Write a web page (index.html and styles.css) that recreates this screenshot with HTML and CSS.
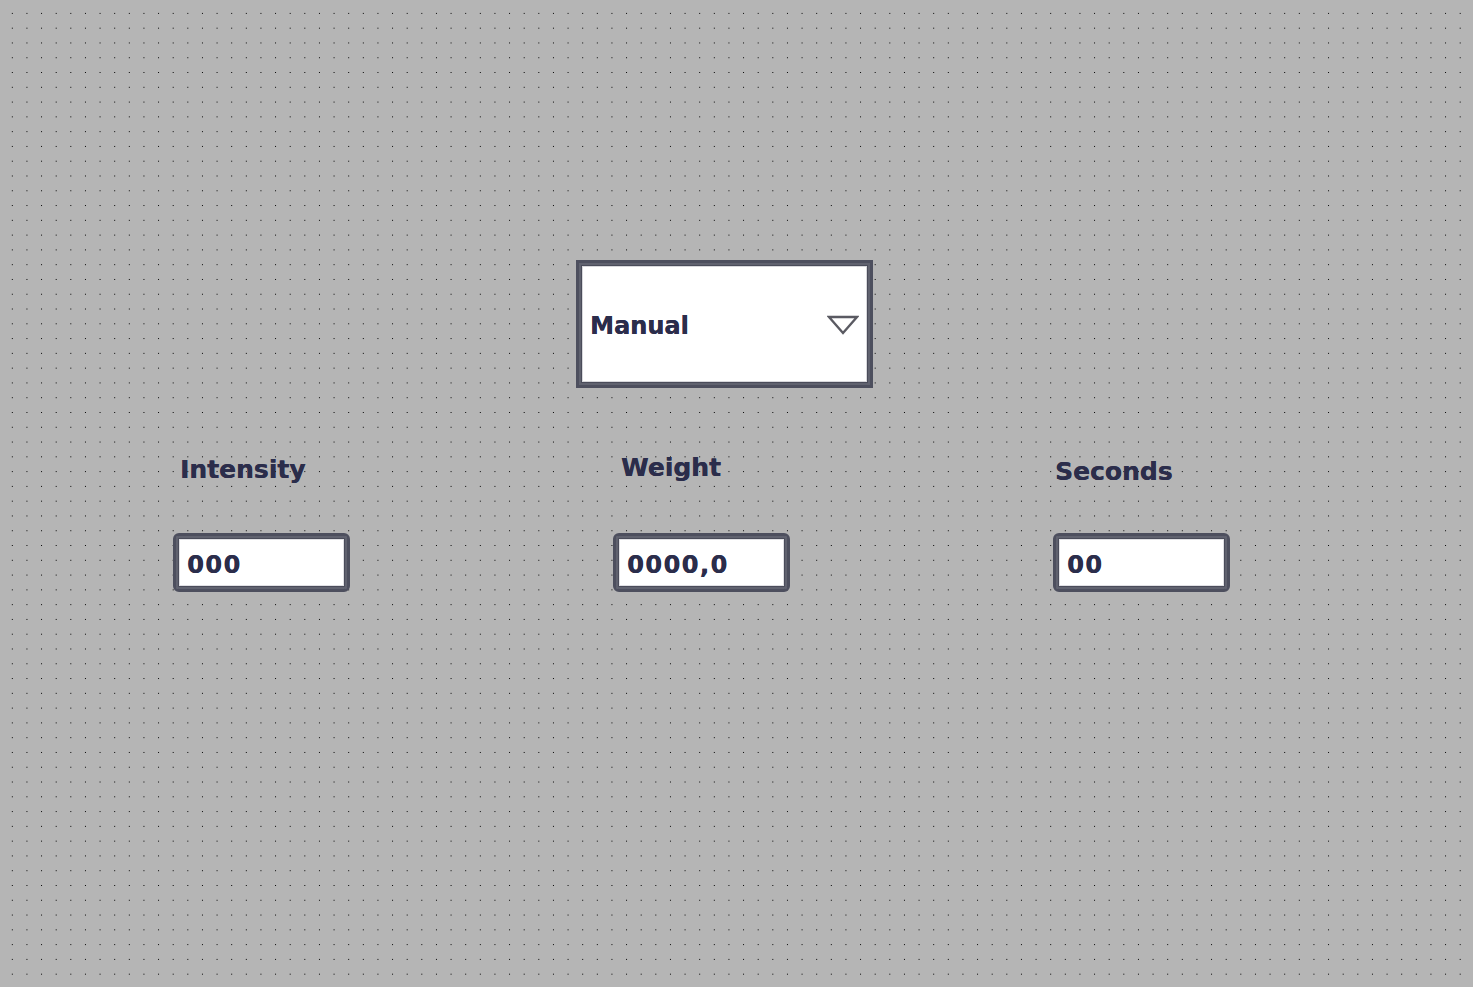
FILE: index.html
```html
<!DOCTYPE html>
<html>
<head>
<meta charset="utf-8">
<link rel="stylesheet" href="styles.css">
</head>
<body>
<div class="screen">
  <div class="dropdown">
    <span class="dropdown-text">Manual</span>
    <svg class="caret" width="32" height="20" viewBox="0 0 32 20">
      <polygon points="2,2 30,2 16,18" fill="none" stroke="#5a5a62" stroke-width="2.4" stroke-linejoin="miter"/>
    </svg>
  </div>
  <div class="fields">
    <div class="field">
      <div class="label label-intensity">Intensity</div>
      <div class="box"><span class="value">000</span></div>
    </div>
    <div class="field">
      <div class="label label-weight">Weight</div>
      <div class="box"><span class="value">0000,0</span></div>
    </div>
    <div class="field">
      <div class="label label-seconds">Seconds</div>
      <div class="box"><span class="value">00</span></div>
    </div>
  </div>
</div>
</body>
</html>
```
FILE: styles.css
```css
html, body {
  margin: 0;
  padding: 0;
}
body {
  width: 1473px;
  height: 987px;
  overflow: hidden;
  background-color: #b5b5b5;
  background-image: radial-gradient(circle, #000 0.7px, rgba(0,0,0,0) 0.85px);
  background-size: 14.64px 14.79px;
  background-position: 5px 6px;
  font-family: "DejaVu Sans", Verdana, sans-serif;
  color: #2b2d4b;
}
.screen {
  padding-top: 260px;
}
.dropdown {
  margin-left: 576px;
  width: 297px;
  height: 128px;
  box-sizing: border-box;
  background: #fff;
  border: 3px solid #4d4f5e;
  box-shadow: inset 0 0 0 2px #60626f, inset 0 0 0 3px #4a4c5a, inset 0 0 0 4px #d8d8dc;
  display: flex;
  align-items: center;
  padding: 2px 11px 0 11px;
  justify-content: space-between;
}
.dropdown-text {
  font-weight: bold;
  font-size: 24px;
  padding-top: 1px;
  text-shadow: 0.3px 0 0 currentColor;
}
.caret {
  display: block;
}
.fields {
  margin-top: 70px;
  margin-left: 173px;
  display: grid;
  grid-template-columns: 440px 440px 177px;
}
.field {
  display: flex;
  flex-direction: column;
  width: 177px;
}
.label {
  font-weight: bold;
  font-size: 25px;
  height: 75px;
  line-height: 28px;
  text-shadow: 0.3px 0 0 currentColor;
}
.label-intensity { padding-left: 7px; margin-top: -2px; height: 77px; }
.label-weight { padding-left: 8px; margin-top: -4px; height: 79px; }
.label-seconds { padding-left: 2px; padding-top: 0px; height: 75px; }
.box {
  width: 177px;
  height: 59px;
  box-sizing: border-box;
  background: #fff;
  border: 3px solid #4d4f5e;
  border-radius: 6px;
  box-shadow: inset 0 0 0 2px #60626f, inset 0 0 0 3px #4a4c5a, inset 0 0 0 4px #e0e0e4;
  display: flex;
  align-items: center;
  padding: 4px 0 0 11px;
}
.value {
  font-weight: bold;
  font-size: 24px;
  letter-spacing: 1.5px;
  text-shadow: 0.4px 0 0 currentColor;
}
```
